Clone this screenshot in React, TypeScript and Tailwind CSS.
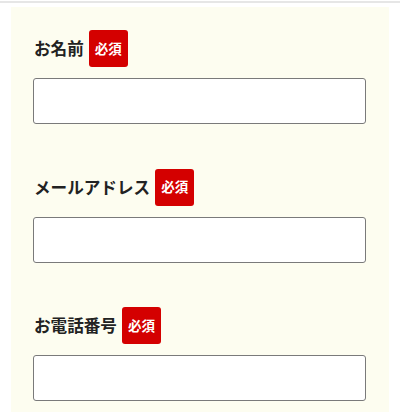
import React from "react";

const fields = ["お名前", "メールアドレス", "お電話番号"];

export default function App() {
  return (
    <div
      className="w-[400px] h-[412px] bg-white overflow-hidden"
      style={{ fontFamily: '"Noto Sans CJK JP", "Noto Sans", sans-serif' }}
    >
      <div className="h-[1px]" />
      <div className="h-[2px] bg-[#e6e6e6]" />
      <div className="h-[4px]" />
      <div className="ml-[11px] w-[378px] h-[420px] bg-[#fdfdf0] pt-[23px] pl-[22px] pr-[23px] flex flex-col gap-[44.5px]">
        {fields.map((f) => (
          <div key={f} className="flex flex-col gap-[11px]">
            <div className="flex items-center gap-[5px] h-[37px] pl-[1px]">
              <span className="text-[16.6px] font-bold text-[#222] leading-none">{f}</span>
              <span className="h-[37px] w-[39px] rounded-[3px] bg-[#d40000] text-white text-[13.5px] font-bold flex items-center justify-center leading-none">
                必須
              </span>
            </div>
            <input
              type="text"
              className="w-[333px] h-[46px] bg-white border border-[#7a7a7a] rounded-[3px] outline-none"
            />
          </div>
        ))}
      </div>
    </div>
  );
}
